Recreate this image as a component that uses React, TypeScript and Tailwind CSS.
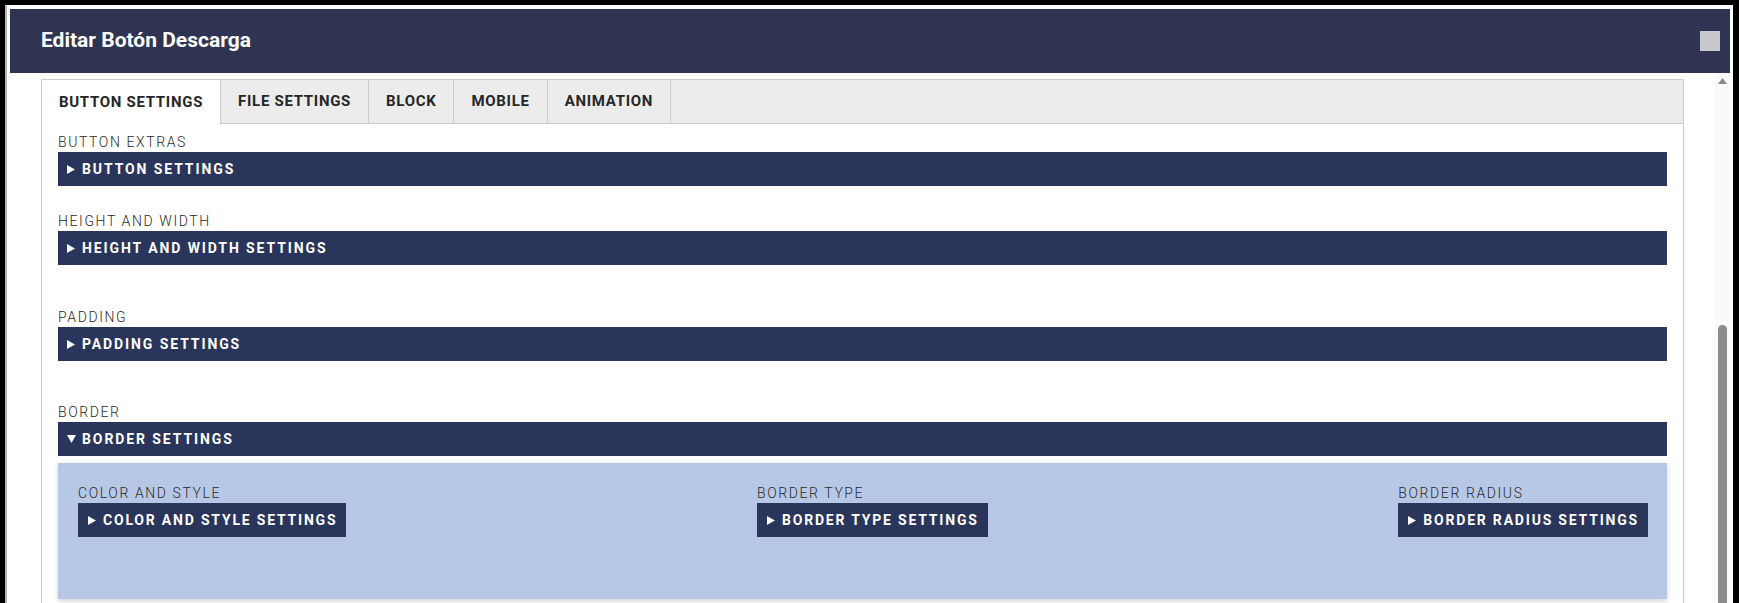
import React from "react";

const font = { fontFamily: "Roboto, 'Noto Sans', 'Liberation Sans', sans-serif" };

function Arrow({ open }: { open?: boolean }) {
  return open ? (
    <svg width="9" height="8" viewBox="0 0 9 8" className="mr-[6px] shrink-0" aria-hidden="true">
      <path d="M0 0 H9 L4.5 8 Z" fill="#fff" />
    </svg>
  ) : (
    <svg width="8" height="9" viewBox="0 0 8 9" className="mr-[7px] shrink-0" aria-hidden="true">
      <path d="M0 0 L8 4.5 L0 9 Z" fill="#fff" />
    </svg>
  );
}

function Bar({ title, open, full = true }: { title: string; open?: boolean; full?: boolean }) {
  return (
    <div
      className={`flex h-[34px] items-center bg-[#29355a] text-[14px] font-bold text-white ${
        full ? "w-full pl-[9px] tracking-[1.9px]" : "w-fit pl-[10px] pr-[9px] tracking-[1.8px]"
      }`}
    >
      <Arrow open={open} />
      <span>{title}</span>
    </div>
  );
}

function Label({ children }: { children: React.ReactNode }) {
  return (
    <div className="h-[18px] text-[14px] leading-[17px] font-light tracking-[1.6px] text-[#2a2a2a]">
      {children}
    </div>
  );
}

const tabs = ["BUTTON SETTINGS", "FILE SETTINGS", "BLOCK", "MOBILE", "ANIMATION"];

export default function App() {
  return (
    <div className="h-[603px] w-[1739px] overflow-hidden bg-black" style={font}>
      <div className="ml-[5px] mt-[5px] h-[598px] w-[1728px] border-l-2 border-t border-l-[#b5b5b5] border-t-white bg-white pl-[3px] pr-[3px] pt-[3px]">
        {/* title bar */}
        <div className="flex h-[64px] items-center justify-between bg-[#2e3452] pl-[31px] pr-[10px]">
          <h1 className="text-[21px] font-bold text-white">Editar Botón Descarga</h1>
          <button type="button" aria-label="Close" className="size-[20px] bg-[#c8c9ce]" />
        </div>

        <div className="flex h-[530px]">
          <div className="flex-1 overflow-hidden pl-[31px] pr-[31px] pt-[6px]">
            <div className="border border-[#cccccc] pb-[40px]">
              {/* tabs */}
              <div className="flex h-[44px] bg-[#ececec]">
                {tabs.map((t, i) => (
                  <div
                    key={t}
                    className={`flex items-center border-r border-[#cccccc] px-[17px] text-[15px] font-bold tracking-[0.7px] text-[#262626] ${
                      i === 0 ? "bg-white" : "border-b"
                    }`}
                  >
                    {t}
                  </div>
                ))}
                <div className="flex-1 border-b border-[#cccccc]" />
              </div>

              <div className="px-[16px] pt-[10px]">
                <Label>BUTTON EXTRAS</Label>
                <Bar title="BUTTON SETTINGS" />

                <div className="mt-[27px]">
                  <Label>HEIGHT AND WIDTH</Label>
                  <Bar title="HEIGHT AND WIDTH SETTINGS" />
                </div>

                <div className="mt-[44px]">
                  <Label>PADDING</Label>
                  <Bar title="PADDING SETTINGS" />
                </div>

                <div className="mt-[43px]">
                  <Label>BORDER</Label>
                  <Bar title="BORDER SETTINGS" open />
                </div>

                <div className="mt-[7px] flex h-[136px] items-start justify-between bg-[#b7c8e6] pl-[20px] pr-[19px] pt-[22px] shadow-[0_2px_5px_rgba(0,0,0,0.18)]">
                  <div>
                    <Label>COLOR AND STYLE</Label>
                    <Bar title="COLOR AND STYLE SETTINGS" full={false} />
                  </div>
                  <div>
                    <Label>BORDER TYPE</Label>
                    <Bar title="BORDER TYPE SETTINGS" full={false} />
                  </div>
                  <div>
                    <Label>BORDER RADIUS</Label>
                    <Bar title="BORDER RADIUS SETTINGS" full={false} />
                  </div>
                </div>
              </div>
            </div>
          </div>

          {/* scrollbar */}
          <div className="relative w-[15px] bg-[#fafafa]">
            <svg width="9" height="6" viewBox="0 0 9 6" className="absolute left-[3px] top-[5px]" aria-hidden="true">
              <path d="M4.5 0 L9 6 H0 Z" fill="#8a8a8a" />
            </svg>
            <div className="absolute left-[3px] top-[252px] h-[300px] w-[9px] rounded-t-full bg-[#8c8c8c]" />
          </div>
        </div>
      </div>
    </div>
  );
}
